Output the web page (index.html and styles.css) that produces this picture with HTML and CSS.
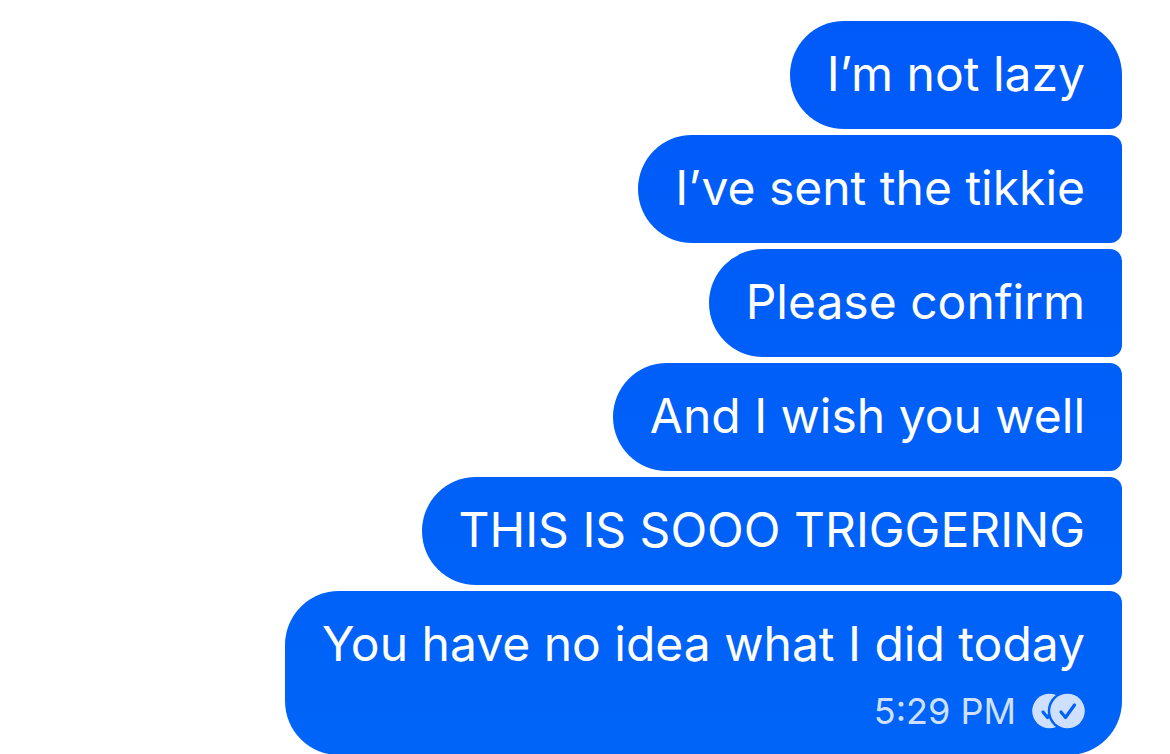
FILE: index.html
```html
<!DOCTYPE html>
<html lang="en">
<head>
    <meta charset="UTF-8" />
    <meta name="viewport" content="width=device-width, initial-scale=1">
    <title>Chat</title>
    <link rel="stylesheet" href="styles.css">
</head>
<body>
    <main class="chat">
        <p class="bubble first">I’m not lazy</p>
        <p class="bubble">I’ve sent the tikkie</p>
        <p class="bubble">Please confirm</p>
        <p class="bubble">And I wish you well</p>
        <p class="bubble">THIS IS SOOO TRIGGERING</p>
        <div class="bubble last">
            <p class="text">You have no idea what I did today</p>
            <div class="meta">
                <time datetime="17:29">5:29 PM</time>
                <svg class="read" viewBox="0 0 54 36" role="img" aria-label="Read">
                    <circle cx="18.5" cy="18" r="17.3" fill="#cfe0ff" />
                    <path d="M12 19l4.5 5.5L25 12" fill="none" stroke="#0062f8" stroke-width="3.2" stroke-linecap="round" stroke-linejoin="round" />
                    <circle cx="36.5" cy="18" r="19.8" fill="#0062f8" />
                    <circle cx="36.5" cy="18" r="17.3" fill="#cfe0ff" />
                    <path d="M30 19l4.5 5.5L43.500 12" fill="none" stroke="#0062f8" stroke-width="3.2" stroke-linecap="round" stroke-linejoin="round" />
                </svg>
            </div>
        </div>
    </main>
</body>
</html>
```
FILE: styles.css
```css
* {
    box-sizing: border-box;
}
html, body {
    margin: 0;
}
body {
    background: #fff;
    font-family: Inter, "Liberation Sans", sans-serif;
    overflow-x: hidden;
}
p {
    margin: 0;
}
.chat {
    display: flex;
    flex-direction: column;
    align-items: flex-end;
    gap: 6px;
    padding: 21px 48px 0;
}
/* one gradient runs down the window behind all bubbles */
.bubble {
    padding: 21px 37px 23px;
    border-radius: 54px 12px 12px 54px;
    background: linear-gradient(#005af8, #0064f8) fixed;
    color: #fff;
    font-size: 48px;
    line-height: 64px;
}
.first {
    border-top-right-radius: 54px;
}
.last {
    border-bottom-right-radius: 54px;
}
.meta {
    display: flex;
    justify-content: flex-end;
    align-items: center;
    gap: 15px;
    margin-top: 14px;
    color: #cfe0ff;
    font-size: 36px;
    line-height: 42px;
}
.read {
    width: 54px;
    height: 36px;
}
```
